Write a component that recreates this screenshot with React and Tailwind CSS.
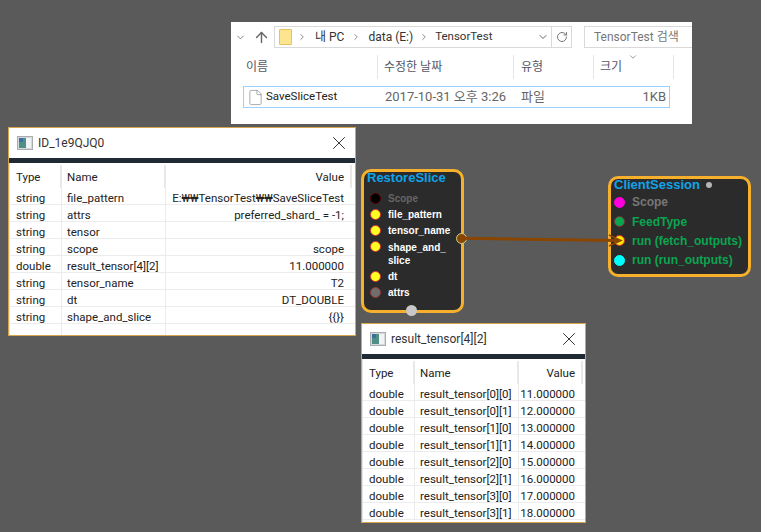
import { ArrowUp, ChevronDown, ChevronRight, ChevronUp, File, RotateCw, X } from 'lucide-react';

const uiFont = 'font-["Roboto","Noto_Sans_CJK_KR",sans-serif]';

function AppIcon() {
  return (
    <svg width="16" height="14" viewBox="0 0 16 14">
      <rect x="0.5" y="0.5" width="15" height="13" fill="#d5d9dc" stroke="#a9adb0" />
      <rect x="2" y="2" width="7" height="10" fill="#4f8f86" />
      <rect x="2" y="2" width="4" height="4" fill="#3e6f9c" />
      <rect x="9" y="2" width="5" height="10" fill="#f1f3f4" />
    </svg>
  );
}

function Table({ rows, nameClass, valueClass }) {
  return (
    <div className="flex-1 overflow-hidden border-l border-[#e4e4e4] text-[11.5px] text-[#222]">
      <div className="flex h-[25px] items-end">
        <div className="h-[23px] w-[52px] border-r-2 border-[#e8e8e8] pl-[6px] leading-[25px]">Type</div>
        <div className={`h-[23px] border-r-2 border-[#e8e8e8] pl-[5px] leading-[25px] ${nameClass}`}>Name</div>
        <div className={`h-[23px] border-r-2 border-[#e8e8e8] pr-[6px] text-right leading-[25px] ${valueClass}`}>Value</div>
      </div>
      {rows.map((r, i) => (
        <div key={i} className="flex h-[17px] items-start border-b border-[#ececec] leading-[20px]">
          <div className="h-full w-[52px] whitespace-nowrap border-r border-[#ececec] pl-[6px]">{r[0]}</div>
          <div className={`h-full whitespace-nowrap border-r border-[#ececec] pl-[5px] ${nameClass}`}>{r[1]}</div>
          <div className={`h-full whitespace-nowrap pr-[8px] text-right ${valueClass}`}>{r[2]}</div>
        </div>
      ))}
    </div>
  );
}

function Win({ className, title, children }) {
  return (
    <div className={`absolute flex flex-col border border-[#d8a54f] bg-white ${uiFont} ${className}`}>
      <div className="flex h-[30px] shrink-0 items-center pl-[8px] pr-[5px]">
        <AppIcon />
        <span className="ml-[5px] text-[12px] text-[#333]">{title}</span>
        <X className="ml-auto" size={22} strokeWidth={1} color="#222" />
      </div>
      <div className="h-[5px] shrink-0 bg-[#1f2a35]" />
      {children}
    </div>
  );
}

function Pin({ dot, label, className = '' }) {
  return (
    <div className={`flex items-center font-bold ${className}`}>
      <span className={`h-[11px] w-[11px] shrink-0 rounded-full border ${dot}`} />
      <span className="ml-[7px]">{label}</span>
    </div>
  );
}

const mainRows = [
  ['string', 'file_pattern', 'E:₩₩TensorTest₩₩SaveSliceTest'],
  ['string', 'attrs', 'preferred_shard_ = -1;'],
  ['string', 'tensor', ''],
  ['string', 'scope', 'scope'],
  ['double', 'result_tensor[4][2]', '11.000000'],
  ['string', 'tensor_name', 'T2'],
  ['string', 'dt', 'DT_DOUBLE'],
  ['string', 'shape_and_slice', '{{}}'],
  ['', '', ''],
];

const resultRows = [
  ['double', 'result_tensor[0][0]', '11.000000'],
  ['double', 'result_tensor[0][1]', '12.000000'],
  ['double', 'result_tensor[1][0]', '13.000000'],
  ['double', 'result_tensor[1][1]', '14.000000'],
  ['double', 'result_tensor[2][0]', '15.000000'],
  ['double', 'result_tensor[2][1]', '16.000000'],
  ['double', 'result_tensor[3][0]', '17.000000'],
  ['double', 'result_tensor[3][1]', '18.000000'],
];

const yellowDot = 'border-[#c33] bg-[#ffff22]';

export default function App() {
  return (
    <div className="relative h-[532px] w-[761px] overflow-hidden bg-[#5a5a5a]">
      {/* Explorer */}
      <div className={`absolute left-[231px] top-[22px] h-[102px] w-[461px] bg-white text-[12px] text-[#333] ${uiFont}`}>
        <div className="flex h-[29px] items-center pt-[1px]">
          <ChevronDown className="ml-[4px]" size={11} color="#777" />
          <ArrowUp className="ml-[7px]" size={17} strokeWidth={2} color="#666" />
          <div className="ml-[4px] flex h-[22px] w-[278px] items-center border border-[#d9d9d9]">
            <span className="ml-[4px] h-[16px] w-[13px] rounded-[1px] border border-[#e5c15f] bg-[#fde58f]" />
            <ChevronRight className="ml-[5px]" size={10} color="#777" />
            <span className="ml-[8px]">내 PC</span>
            <ChevronRight className="ml-[7px]" size={10} color="#777" />
            <span className="ml-[7px]">data (E:)</span>
            <ChevronRight className="ml-[6px]" size={10} color="#777" />
            <span className="ml-[6px] text-[11.5px]">TensorTest</span>
            <ChevronDown className="ml-auto mr-[2px]" size={12} color="#666" />
          </div>
          <div className="flex h-[22px] w-[20px] items-center justify-center border-y border-r border-[#d9d9d9]">
            <RotateCw size={12} color="#777" />
          </div>
          <div className="ml-[12px] flex h-[22px] flex-1 items-center border-y border-l border-[#d9d9d9] pl-[9px] text-[#777]">TensorTest 검색</div>
        </div>
        <div className="relative flex h-[31px] items-center text-[#556]">
          <span className="w-[147px] border-r border-[#e5e5e5] pl-[15px] leading-[24px]">이름</span>
          <span className="w-[136px] border-r border-[#e5e5e5] pl-[6px] leading-[24px]">수정한 날짜</span>
          <span className="w-[80px] border-r border-[#e5e5e5] pl-[7px] leading-[24px]">유형</span>
          <span className="w-[80px] border-r border-[#e5e5e5] pl-[6px] leading-[24px]">크기</span>
          <ChevronUp className="absolute left-[397px] top-[1px] rotate-180" size={10} color="#888" />
        </div>
        <div className="ml-[12px] mt-[4px] flex h-[22px] w-[427px] items-center border border-[#99d1ff] text-[13px]">
          <File className="ml-[3px]" size={17} strokeWidth={1} color="#888" />
          <span className="ml-[2px] w-[119px] text-[11.5px] text-[#222]">SaveSliceTest</span>
          <span className="w-[136px] whitespace-nowrap text-[#666]">2017-10-31 오후 3:26</span>
          <span className="text-[#666]">파일</span>
          <span className="ml-auto pr-[3px] text-[#666]">1KB</span>
        </div>
      </div>

      <Win className="left-[8px] top-[127px] h-[209px] w-[348px]" title="ID_1e9QJQ0">
        <Table rows={mainRows} nameClass="w-[104px]" valueClass="w-[186px]" />
      </Win>

      <Win className="left-[361px] top-[323px] h-[200px] w-[225px]" title="result_tensor[4][2]">
        <Table rows={resultRows} nameClass="w-[104px]" valueClass="w-[64px]" />
      </Win>

      {/* RestoreSlice node */}
      <div className="absolute left-[361px] top-[169px] h-[144px] w-[103px] rounded-[10px] border-[3px] border-[#f7b02b] bg-[#2b2b2b] font-['Liberation_Sans',sans-serif] text-[10px] leading-[13px] text-white">
        <div className="ml-[3px] mt-[-2px] text-[13px] font-bold leading-[16px] text-[#0fa3e8]">RestoreSlice</div>
        <div className="ml-[6px] mt-[4px] flex flex-col">
          <Pin dot="border-[#500] bg-black" label="Scope" className="h-[16px] text-[#666]" />
          <Pin dot={yellowDot} label="file_pattern" className="h-[16px]" />
          <Pin dot={yellowDot} label="tensor_name" className="h-[17px]" />
          <div className="flex h-[29px] items-start pt-[2px] font-bold">
            <span className={`h-[11px] w-[11px] shrink-0 rounded-full border ${yellowDot}`} />
            <span className="ml-[7px]">shape_and_<br />slice</span>
          </div>
          <Pin dot={yellowDot} label="dt" className="h-[16px]" />
          <Pin dot="border-[#933] bg-[#6e6e6e]" label="attrs" className="h-[17px]" />
        </div>
      </div>
      <span className="absolute left-[406px] top-[305px] h-[11px] w-[11px] rounded-full bg-[#c8c8c8]" />

      {/* ClientSession node */}
      <div className="absolute left-[608px] top-[176px] h-[101px] w-[143px] rounded-[10px] border-[3px] border-[#f7b02b] bg-[#2b2b2b] font-['Liberation_Sans',sans-serif] text-[12px] leading-[14px] text-[#0aa550]">
        <div className="ml-[3px] mt-[-2px] flex items-center text-[13px] font-bold leading-[16px] text-[#0fa3e8]">
          ClientSession
          <span className="ml-[6px] h-[6px] w-[6px] rounded-full bg-[#b5b5b5]" />
        </div>
        <div className="ml-[3px] mt-[-1px] flex flex-col">
          <Pin dot="border-[#ff00dd] bg-[#ff00dd]" label="Scope" className="h-[20px] text-[#777]" />
          <Pin dot="border-[#733] bg-[#0aa550]" label="FeedType" className="h-[19px]" />
          <Pin dot="border-[#c33] bg-[#ffe600]" label="run (fetch_outputs)" className="h-[19px]" />
          <Pin dot="border-[#00ffff] bg-[#00ffff]" label="run (run_outputs)" className="h-[20px]" />
        </div>
      </div>

      {/* Link between nodes, drawn over the pins */}
      <svg className="absolute left-0 top-0" width="761" height="532">
        <circle cx="461.5" cy="238.5" r="5" fill="#8a4500" stroke="#c7d08a" />
        <path d="M462 238.3 L619 240.6" stroke="#8a4500" strokeWidth="3" fill="none" />
        <path d="M609 235 L621 240.5 L609 246" stroke="#8a4500" strokeWidth="1.5" fill="none" />
      </svg>
    </div>
  );
}
